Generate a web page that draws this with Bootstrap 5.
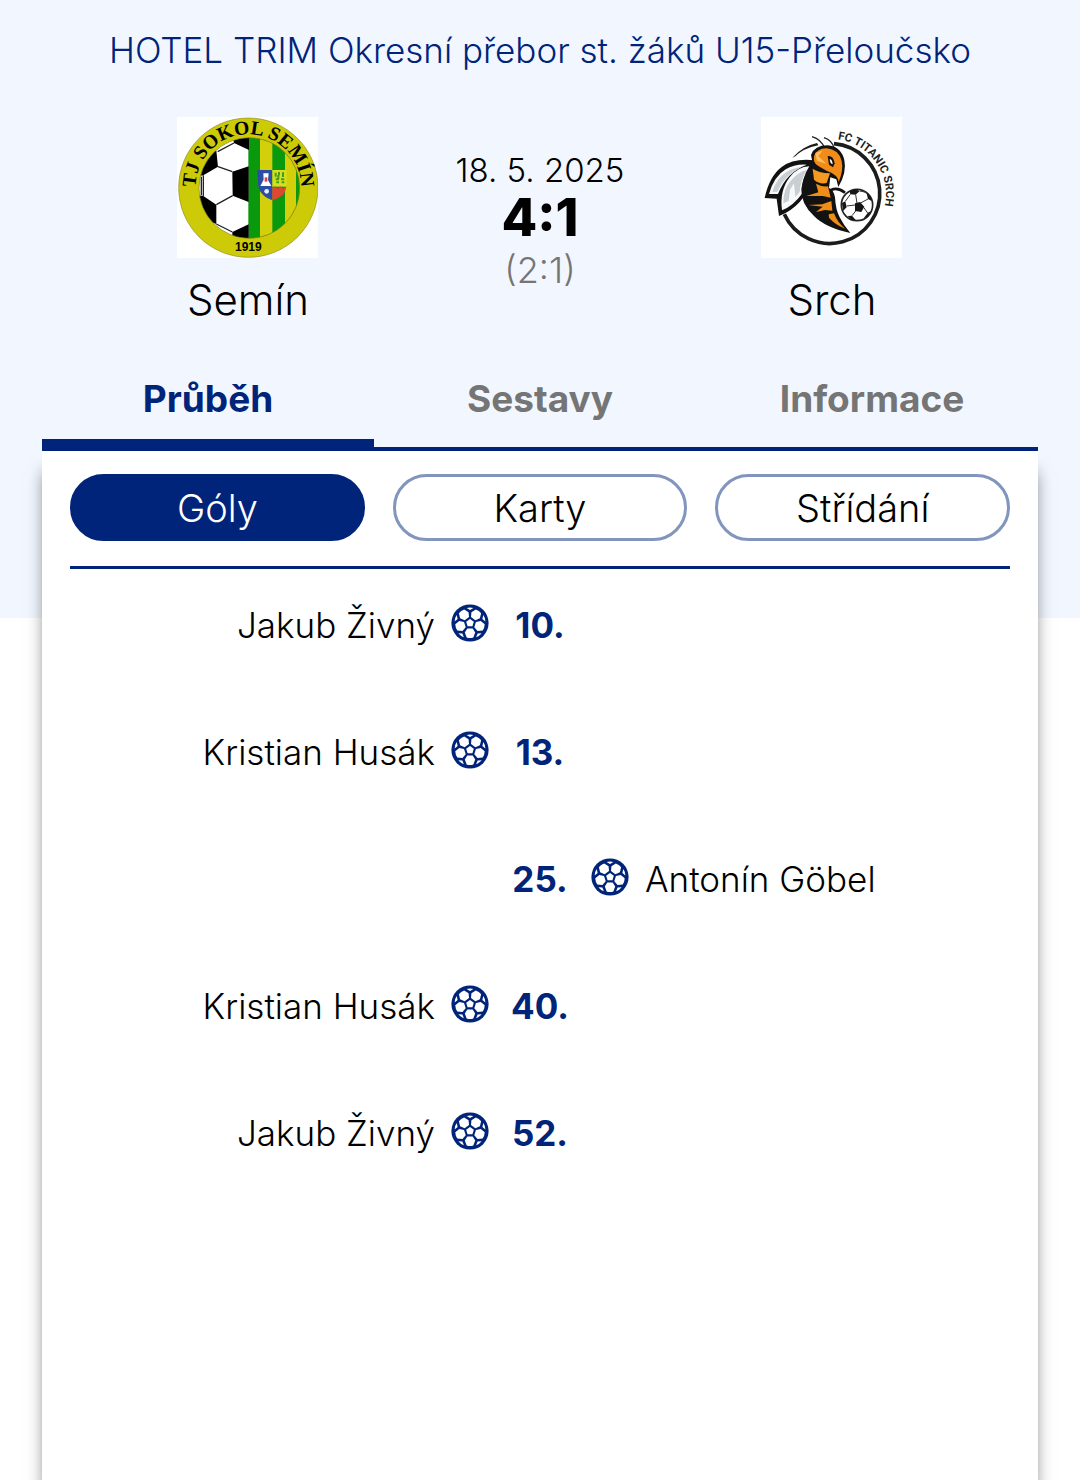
<!DOCTYPE html>
<html lang="cs">
<head>
<meta charset="utf-8">
<meta name="viewport" content="width=device-width, initial-scale=1">
<title>Semín – Srch</title>
<link href="https://cdn.jsdelivr.net/npm/bootstrap@5.3.0/dist/css/bootstrap.min.css" rel="stylesheet">
<style>
  :root { --navy: #00247a; --sky: #f2f7ff; --muted: #757575; }
  body { font-family: Inter, "Liberation Sans", sans-serif; font-weight: 300; color: #000; background: #fff; }
  .match-head { background: var(--sky); padding-bottom: 167px; }
  .league { color: var(--navy); font-size: 35px; line-height: 44px; padding-top: 28px; margin-bottom: 45px; font-weight: 300; }
  .teams { padding: 0 102px; height: 213px; }
  .crest { width: 141px; height: 141px; display: block; }
  .team-name { font-size: 42px; line-height: 52px; margin-top: 16px; }
  .match-date { font-size: 33px; line-height: 40px; margin-top: 33px; }
  .score { font-size: 52px; line-height: 56px; font-weight: 800; }
  .halftime { font-size: 36px; line-height: 48px; color: var(--muted); }
  .side-gap { margin-left: 42px; margin-right: 42px; }
  .match-tabs { border-bottom: 4px solid var(--navy); margin-top: 20px; }
  .match-tabs .nav-link { font-size: 37px; line-height: 48px; font-weight: 700; color: var(--muted); padding: 25px 0 16px; border-radius: 0; border-bottom: 8px solid transparent; }
  .match-tabs .nav-link.active { color: var(--navy); background: none; border-color: var(--navy); }
  .panel { background: #fff; margin-top: -167px; padding: 23px 28px; box-shadow: 0 18px 16px -3px rgba(0,0,0,.55); }
  .filters { gap: 28px; padding-bottom: 25px; border-bottom: 3px solid var(--navy); }
  .filters .btn { flex: 1 1 0; height: 67px; font-size: 38px; line-height: 48px; font-weight: 300; padding: 0; border: 3px solid #8295bd; color: #000; }
  .filters .btn.active { background: var(--navy); border-color: var(--navy); color: #fff; }
  .goal { font-size: 35px; line-height: 48px; height: 127px; padding-top: 32px; }
  .goal-side { flex: 1 1 0; gap: 16px; height: 48px; }
  .goal-side svg { width: 38px; height: 38px; margin-bottom: 4px; flex: none; }
  .minute { width: 102px; text-align: center; color: var(--navy); font-weight: 700; }
</style>
</head>
<body class="min-vh-100 d-flex flex-column">
<svg class="d-none" aria-hidden="true">
  <symbol id="ball" viewBox="0 0 38 38">
    <g id="cell">
      <circle cx="19" cy="19" r="18.6" fill="#00247a"/>
    </g>
    <g fill="#fff">
      <path d="M19 15 22.8 17.8 21.4 22.3H16.6L15.2 17.8Z"/>
      <path id="hex" d="M16.3 13.6H21.7L24.2 9.4 22.3 4.6Q19 3.6 15.7 4.6L13.8 9.4Z" transform="rotate(36 19 19)"/>
      <use href="#hex" transform="rotate(72 19 19)"/>
      <use href="#hex" transform="rotate(144 19 19)"/>
      <use href="#hex" transform="rotate(216 19 19)"/>
      <use href="#hex" transform="rotate(288 19 19)"/>
      <path id="chip" d="M15.6 3.9Q19 2.9 22.4 3.9L19 6Z"/>
      <use href="#chip" transform="rotate(72 19 19)"/>
      <use href="#chip" transform="rotate(144 19 19)"/>
      <use href="#chip" transform="rotate(216 19 19)"/>
      <use href="#chip" transform="rotate(288 19 19)"/>
    </g>
  </symbol>
</svg>

<header class="match-head">
  <h1 class="league text-center">HOTEL TRIM Okresní přebor st. žáků U15-Přeloučsko</h1>
  <div class="teams row g-0 text-center">
    <div class="col-4 d-flex flex-column align-items-center">
      <svg class="crest" viewBox="24 21 423 423" role="img" aria-label="TJ Sokol Semín">
        <defs>
          <clipPath id="inner"><circle cx="241" cy="234" r="151"/></clipPath>
          <path id="arcS" d="M82 256A158 158 0 1 1 394 256"/>
        </defs>
        <rect x="24" y="21" width="423" height="423" fill="#fff"/>
        <circle cx="238" cy="233" r="209" fill="#cdcb08" stroke="#8d8b1c" stroke-width="2"/>
        <g clip-path="url(#inner)">
          <rect x="85" y="80" width="155" height="310" fill="#fff"/>
          <rect x="238" y="80" width="160" height="310" fill="#0a980d"/>
          <path d="M273 80h37v310h-37zM348 80h33v310h-33z" fill="#d3cf0a"/>
          <path d="M80 125 142 122 147 170 103 196 80 200ZM190 75H240V120L195 99ZM190 185 239 169V276L191 257ZM80 255 103 258 142 284V342L80 320ZM190 366 239 343V390H190Z"/>
          <path d="M146 125 195 99M147 170 190 185M191 257 142 284M142 342 190 366M103 196V258M97 200V256" fill="none" stroke="#222" stroke-width="4"/>
        </g>
        <circle cx="241" cy="234" r="151" fill="none" stroke="#807d1a" stroke-width="2"/>
        <path d="M265 180H310V271Q266 255 267 217Z" fill="#2c4da5"/>
        <path d="M310 180H353V230H310Z" fill="#d5df1b"/>
        <path d="M310 235 318 229 326 236 334 229 342 236 352 228Q350 260 310 271Z" fill="#e04632"/>
        <path d="M283 190H299L297 210 307 228H274L284 209Z" fill="#fff"/>
        <path d="M287 202H295V215H287Z" fill="#d64040"/>
        <circle cx="293" cy="244" r="7" fill="#e9edff"/>
        <path d="M320 188v12m10-14v10m12-9v14m-22 7h10m6 0h10m-24 9h8m8 0h8m-18-22v12" stroke="#449b20" stroke-width="6" fill="none"/>
        <text font-family="Liberation Serif, serif" font-weight="700" font-size="59" text-anchor="middle"><textPath href="#arcS" startOffset="50%">TJ SOKOL SEMÍN</textPath></text>
        <text x="238" y="422" font-family="Liberation Sans, sans-serif" font-weight="700" font-size="36" text-anchor="middle">1919</text>
      </svg>
      <div class="team-name">Semín</div>
    </div>
    <div class="col-4">
      <div class="match-date">18. 5. 2025</div>
      <div class="score">4:1</div>
      <div class="halftime">(2:1)</div>
    </div>
    <div class="col-4 d-flex flex-column align-items-center">
      <svg class="crest" viewBox="18 21 423 423" role="img" aria-label="FC Titanic Srch">
        <defs><path id="arcT" d="M248 88A166 166 0 0 1 386 300"/></defs>
        <rect x="18" y="21" width="423" height="423" fill="#fff"/>
        <path d="M237 101A150 150 0 1 1 88 313" fill="none" stroke="#1c1c1c" stroke-width="11"/>
        <path d="M112 143Q144 108 186 99L190 106Q145 115 121 139Z" fill="#1c1c1c"/>
        <path d="M171 80Q199 88 209 115M207 83Q232 91 238 116" fill="none" stroke="#222" stroke-width="4"/>
        <path d="M29 264Q43 199 80 171 116 144 178 151L178 200Q145 290 72 318L65 266Z" fill="#111"/>
        <path d="M42 252Q57 199 92 178 118 162 155 164 94 187 69 252Z" fill="#f7f8fa"/>
        <path d="M52 246Q64 205 94 187 114 174 139 171 88 195 67 245Z" fill="#c9ced3"/>
        <path d="M81 301Q73 242 104 202 129 170 163 169 139 205 141 251 116 286 81 301Z" fill="#f7f8fa"/>
        <path d="M85 280Q84 235 112 207 134 184 155 180 136 213 134 246L121 261 117 220 105 239 101 273Z" fill="#c9ced3"/>
        <path d="M175 170 168 135Q178 106 218 106 258 109 268 150 276 187 250 231L244 208 226 202 222 234Q236 240 240 262 242 300 254 322 266 346 286 369 211 353 177 318 137 281 139 237 143 195 175 170Z" fill="#121212"/>
        <path d="M228 240Q248 230 270 248" fill="none" stroke="#121212" stroke-width="8"/>
        <path d="M177 139Q184 116 215 115 251 118 260 153 266 181 251 216 249 194 216 183L195 171Q173 161 177 139Z" fill="#f28c18"/>
        <path d="M173 176Q190 188 225 190L215 219Q195 224 177 209Z" fill="#f49a22"/>
        <path d="M183 221Q203 232 219 229L227 263 203 258 154 258 190 247ZM160 285 202 283 229 273 232 302 210 300 183 306 203 290ZM221 313 237 310Q247 337 270 356 239 343 222 323Z" fill="#f08c18"/>
        <path d="M181 129 202 122 190 139 214 161 186 152Z" fill="#ffc05c"/>
        <path d="M218 138Q235 136 239 160L234 172 222 164Z" fill="#111"/>
        <path d="M224 147Q232 148 233 163 225 161 224 147Z" fill="#fff"/>
        <circle cx="306" cy="285" r="47" fill="#fff" stroke="#222" stroke-width="5"/>
        <path d="M300 280 315 276 328 290 319 306 300 303ZM284 244 301 238 314 243 302 254 286 253ZM334 247 347 262 350 273 339 267ZM261 279 271 274 275 292 264 303ZM278 318 291 317 302 330 289 330ZM338 309 348 302 338 321 326 325Z" fill="#161616"/>
        <path d="M302 254 306 280M315 280 339 267M326 292 338 309M302 303 291 317M275 288 300 285M271 274 286 253M314 243 334 247" fill="none" stroke="#333" stroke-width="3"/>
        <text font-family="Roboto, sans-serif" font-weight="700" font-size="34" fill="#222"><textPath href="#arcT">FC TITANIC SRCH</textPath></text>
      </svg>
      <div class="team-name">Srch</div>
    </div>
  </div>
  <nav class="match-tabs nav nav-fill side-gap row g-0">
    <a class="nav-link col-4 active" href="#prubeh" aria-current="page">Průběh</a>
    <a class="nav-link col-4" href="#sestavy">Sestavy</a>
    <a class="nav-link col-4" href="#informace">Informace</a>
  </nav>
</header>

<main class="panel side-gap flex-grow-1" id="prubeh">
  <div class="filters d-flex">
    <button type="button" class="btn rounded-pill active">Góly</button>
    <button type="button" class="btn rounded-pill">Karty</button>
    <button type="button" class="btn rounded-pill">Střídání</button>
  </div>
  <ol class="list-unstyled mb-0">
    <li class="goal d-flex"><div class="goal-side d-flex align-items-center justify-content-end">Jakub Živný <svg><use href="#ball"/></svg></div><div class="minute">10.</div><div class="goal-side"></div></li>
    <li class="goal d-flex"><div class="goal-side d-flex align-items-center justify-content-end">Kristian Husák <svg><use href="#ball"/></svg></div><div class="minute">13.</div><div class="goal-side"></div></li>
    <li class="goal d-flex"><div class="goal-side"></div><div class="minute">25.</div><div class="goal-side d-flex align-items-center"><svg><use href="#ball"/></svg> Antonín Göbel</div></li>
    <li class="goal d-flex"><div class="goal-side d-flex align-items-center justify-content-end">Kristian Husák <svg><use href="#ball"/></svg></div><div class="minute">40.</div><div class="goal-side"></div></li>
    <li class="goal d-flex"><div class="goal-side d-flex align-items-center justify-content-end">Jakub Živný <svg><use href="#ball"/></svg></div><div class="minute">52.</div><div class="goal-side"></div></li>
  </ol>
</main>
<script src="https://cdn.jsdelivr.net/npm/bootstrap@5.3.0/dist/js/bootstrap.bundle.min.js"></script>
</body>
</html>
